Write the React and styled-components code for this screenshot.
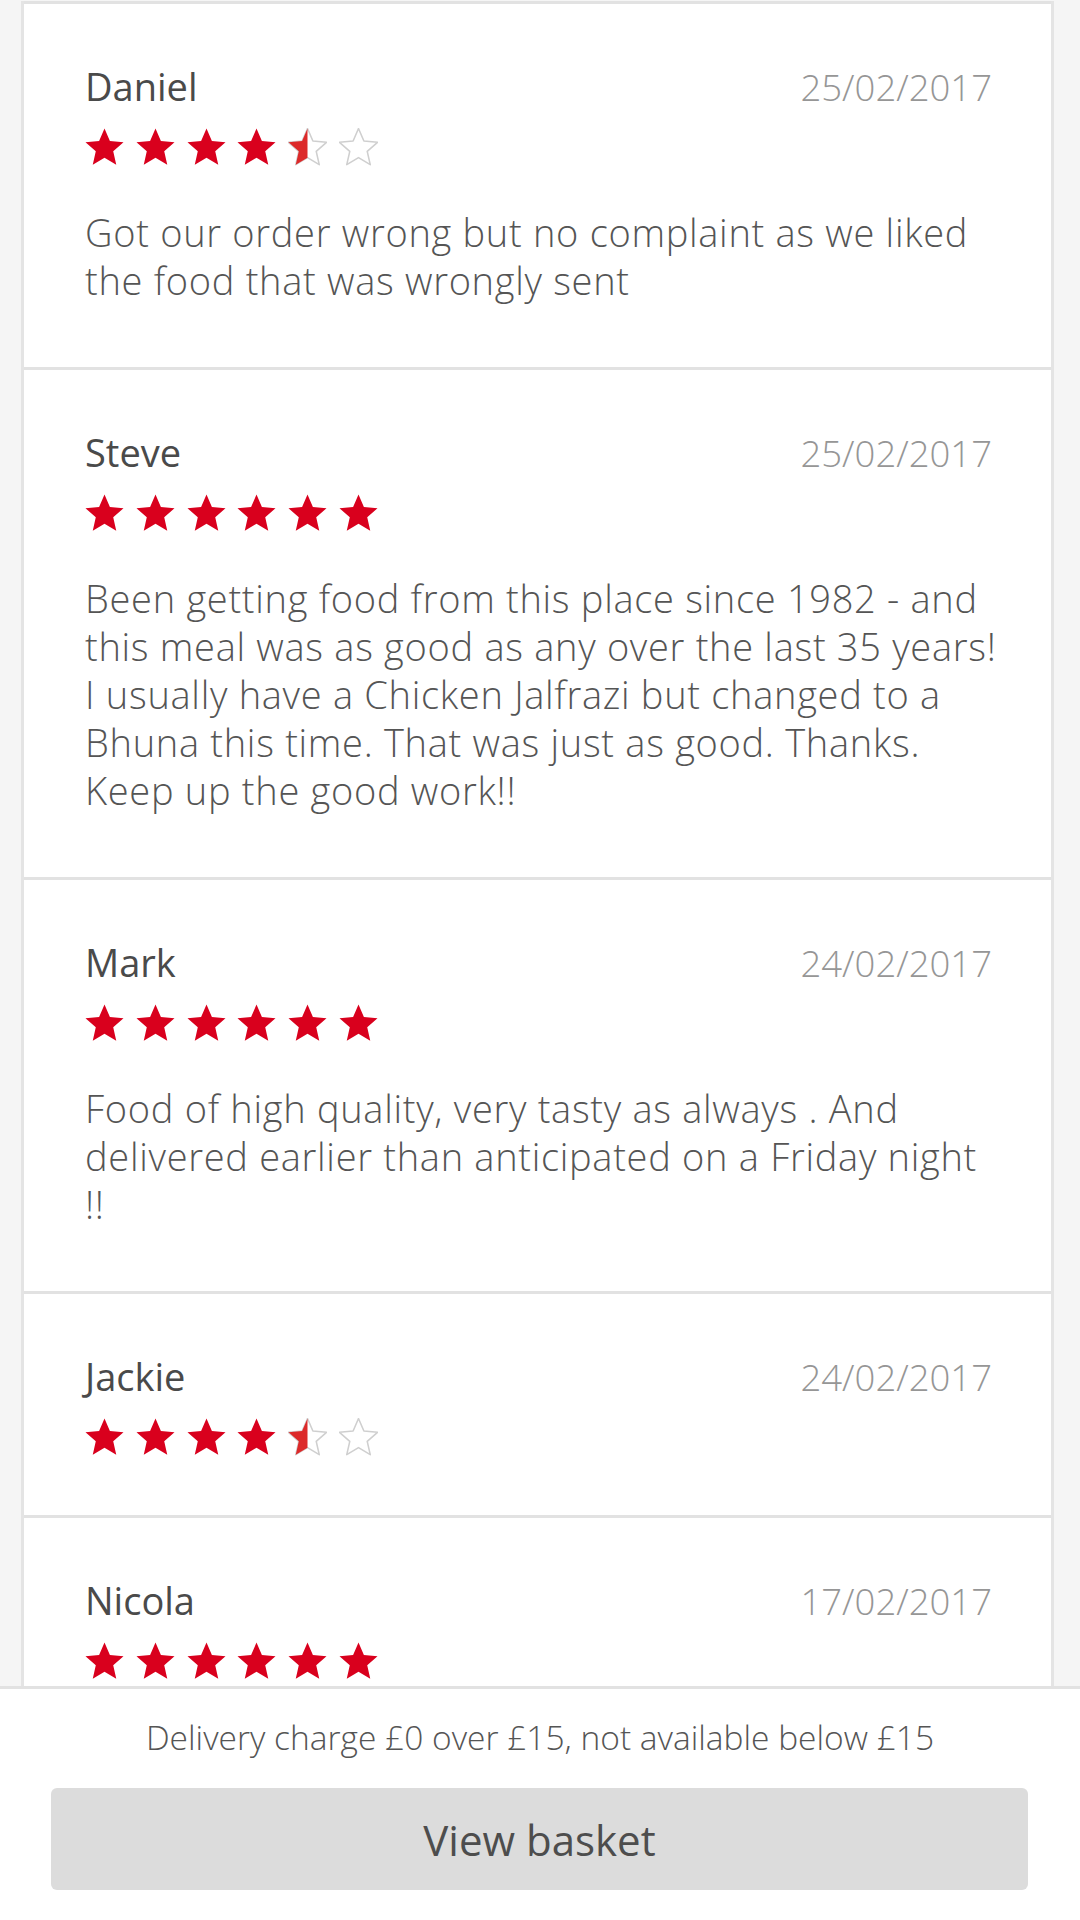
import React, { useId } from 'react';
import styled, { createGlobalStyle } from 'styled-components';

const GlobalStyle = createGlobalStyle`
    html, body {
        margin: 0;
        padding: 0;
        background: #f5f5f5;
        font-family: "Open Sans", "Noto Sans", sans-serif;
    }
    * {
        box-sizing: border-box;
    }
`;

// lines kept as the app breaks them on this screen width
const reviews = [
    {
        name: 'Daniel',
        date: '25/02/2017',
        rating: 4.5,
        lines: [
            'Got our order wrong but no complaint as we liked',
            'the food that was wrongly sent',
        ],
    },
    {
        name: 'Steve',
        date: '25/02/2017',
        rating: 6,
        lines: [
            'Been getting food from this place since 1982 - and',
            'this meal was as good as any over the last 35 years!',
            'I usually have a Chicken Jalfrazi but changed to a',
            'Bhuna this time. That was just as good. Thanks.',
            'Keep up the good work!!',
        ],
    },
    {
        name: 'Mark',
        date: '24/02/2017',
        rating: 6,
        lines: [
            'Food of high quality, very tasty as always . And',
            'delivered earlier than anticipated on a Friday night',
            '!!',
        ],
    },
    {
        name: 'Jackie',
        date: '24/02/2017',
        rating: 4.5,
        lines: [],
    },
    {
        name: 'Nicola',
        date: '17/02/2017',
        rating: 6,
        lines: [],
    },
];

// five-point star in a 40x40 box
const STAR_POINTS = (() => {
    const cx = 20, cy = 21, R = 20.5, r = 9.4;
    const pts = [];
    for (let i = 0; i < 10; i++) {
        const rad = i % 2 === 0 ? R : r;
        const a = (Math.PI / 5) * i - Math.PI / 2;
        pts.push(`${(cx + rad * Math.cos(a)).toFixed(2)},${(cy + rad * Math.sin(a)).toFixed(2)}`);
    }
    return pts.join(' ');
})();

function Star({ fill }) {
    const id = useId();
    if (fill === 'full') {
        return (
            <StarSvg viewBox="0 0 40 40">
                <polygon points={STAR_POINTS} fill="#d9001d" />
            </StarSvg>
        );
    }
    if (fill === 'half') {
        return (
            <StarSvg viewBox="0 0 40 40">
                <defs>
                    <clipPath id={id}>
                        <rect x="0" y="0" width="20" height="40" />
                    </clipPath>
                </defs>
                <polygon points={STAR_POINTS} fill="#fff" stroke="#cfcfcf" strokeWidth="1.6" strokeLinejoin="round" />
                <polygon points={STAR_POINTS} fill="#dc2a2a" clipPath={`url(#${id})`} />
            </StarSvg>
        );
    }
    return (
        <StarSvg viewBox="0 0 40 40">
            <polygon points={STAR_POINTS} fill="#fff" stroke="#cfcfcf" strokeWidth="1.6" strokeLinejoin="round" />
        </StarSvg>
    );
}

function Rating({ value }) {
    const stars = [];
    for (let i = 1; i <= 6; i++) {
        let fill = 'empty';
        if (value >= i) fill = 'full';
        else if (value >= i - 0.5) fill = 'half';
        stars.push(<Star key={i} fill={fill} />);
    }
    return <Stars>{stars}</Stars>;
}

export default function App() {
    return (
        <Page>
            <GlobalStyle />
            <List>
                {reviews.map((r) => (
                    <Card key={r.name}>
                        <Header>
                            <Name>{r.name}</Name>
                            <DateText>{r.date}</DateText>
                        </Header>
                        <Rating value={r.rating} />
                        {r.lines.length > 0 && <Body>{r.lines.join('\n')}</Body>}
                    </Card>
                ))}
            </List>
            <Footer>
                <DeliveryNote>Delivery charge £0 over £15, not available below £15</DeliveryNote>
                <BasketButton>View basket</BasketButton>
            </Footer>
        </Page>
    );
}

const Page = styled.div`
    padding-top: 1px;
`;

const List = styled.div`
    margin: 0 26px 0 21px;
    background: #fff;
    border-left: 3px solid #e4e4e4;
    border-right: 3px solid #e4e4e4;
`;

const Card = styled.div`
    border-top: 3px solid #e2e2e2;
    padding: 60px 59px 58px 61px;
`;

const Header = styled.div`
    display: flex;
    justify-content: space-between;
    align-items: baseline;
    line-height: 44px;
`;

const Name = styled.div`
    font-size: 38px;
    font-weight: 500;
    color: #4a4a4a;
`;

const DateText = styled.div`
    font-size: 36.5px;
    font-weight: 300;
    color: #969696;
`;

const Stars = styled.div`
    display: flex;
    gap: 11.8px;
    margin-top: 19px;
`;

const StarSvg = styled.svg`
    display: block;
    width: 39px;
    height: 39px;
`;

const Body = styled.p`
    margin: 41px -20px 5px 0;
    font-size: 38px;
    font-weight: 300;
    letter-spacing: 0.7px;
    line-height: 48px;
    color: #555;
    white-space: pre-line;
`;

const Footer = styled.div`
    position: fixed;
    left: 0;
    right: 0;
    bottom: 0;
    height: 234px;
    background: #fff;
    border-top: 3px solid #e2e2e2;
    padding: 28px 0 30px;
    display: flex;
    flex-direction: column;
    align-items: center;
`;

const DeliveryNote = styled.div`
    font-size: 33.5px;
    font-weight: 300;
    line-height: 40px;
    color: #555;
`;

const BasketButton = styled.button`
    margin-top: 31px;
    align-self: stretch;
    margin-left: 51px;
    margin-right: 52px;
    height: 102px;
    border: none;
    border-radius: 6px;
    background: #dcdcdc;
    font-family: "Open Sans", "Noto Sans", sans-serif;
    font-size: 42px;
    font-weight: 400;
    color: #4d4d4d;
    display: flex;
    align-items: center;
    justify-content: center;
    padding: 0;
`;
